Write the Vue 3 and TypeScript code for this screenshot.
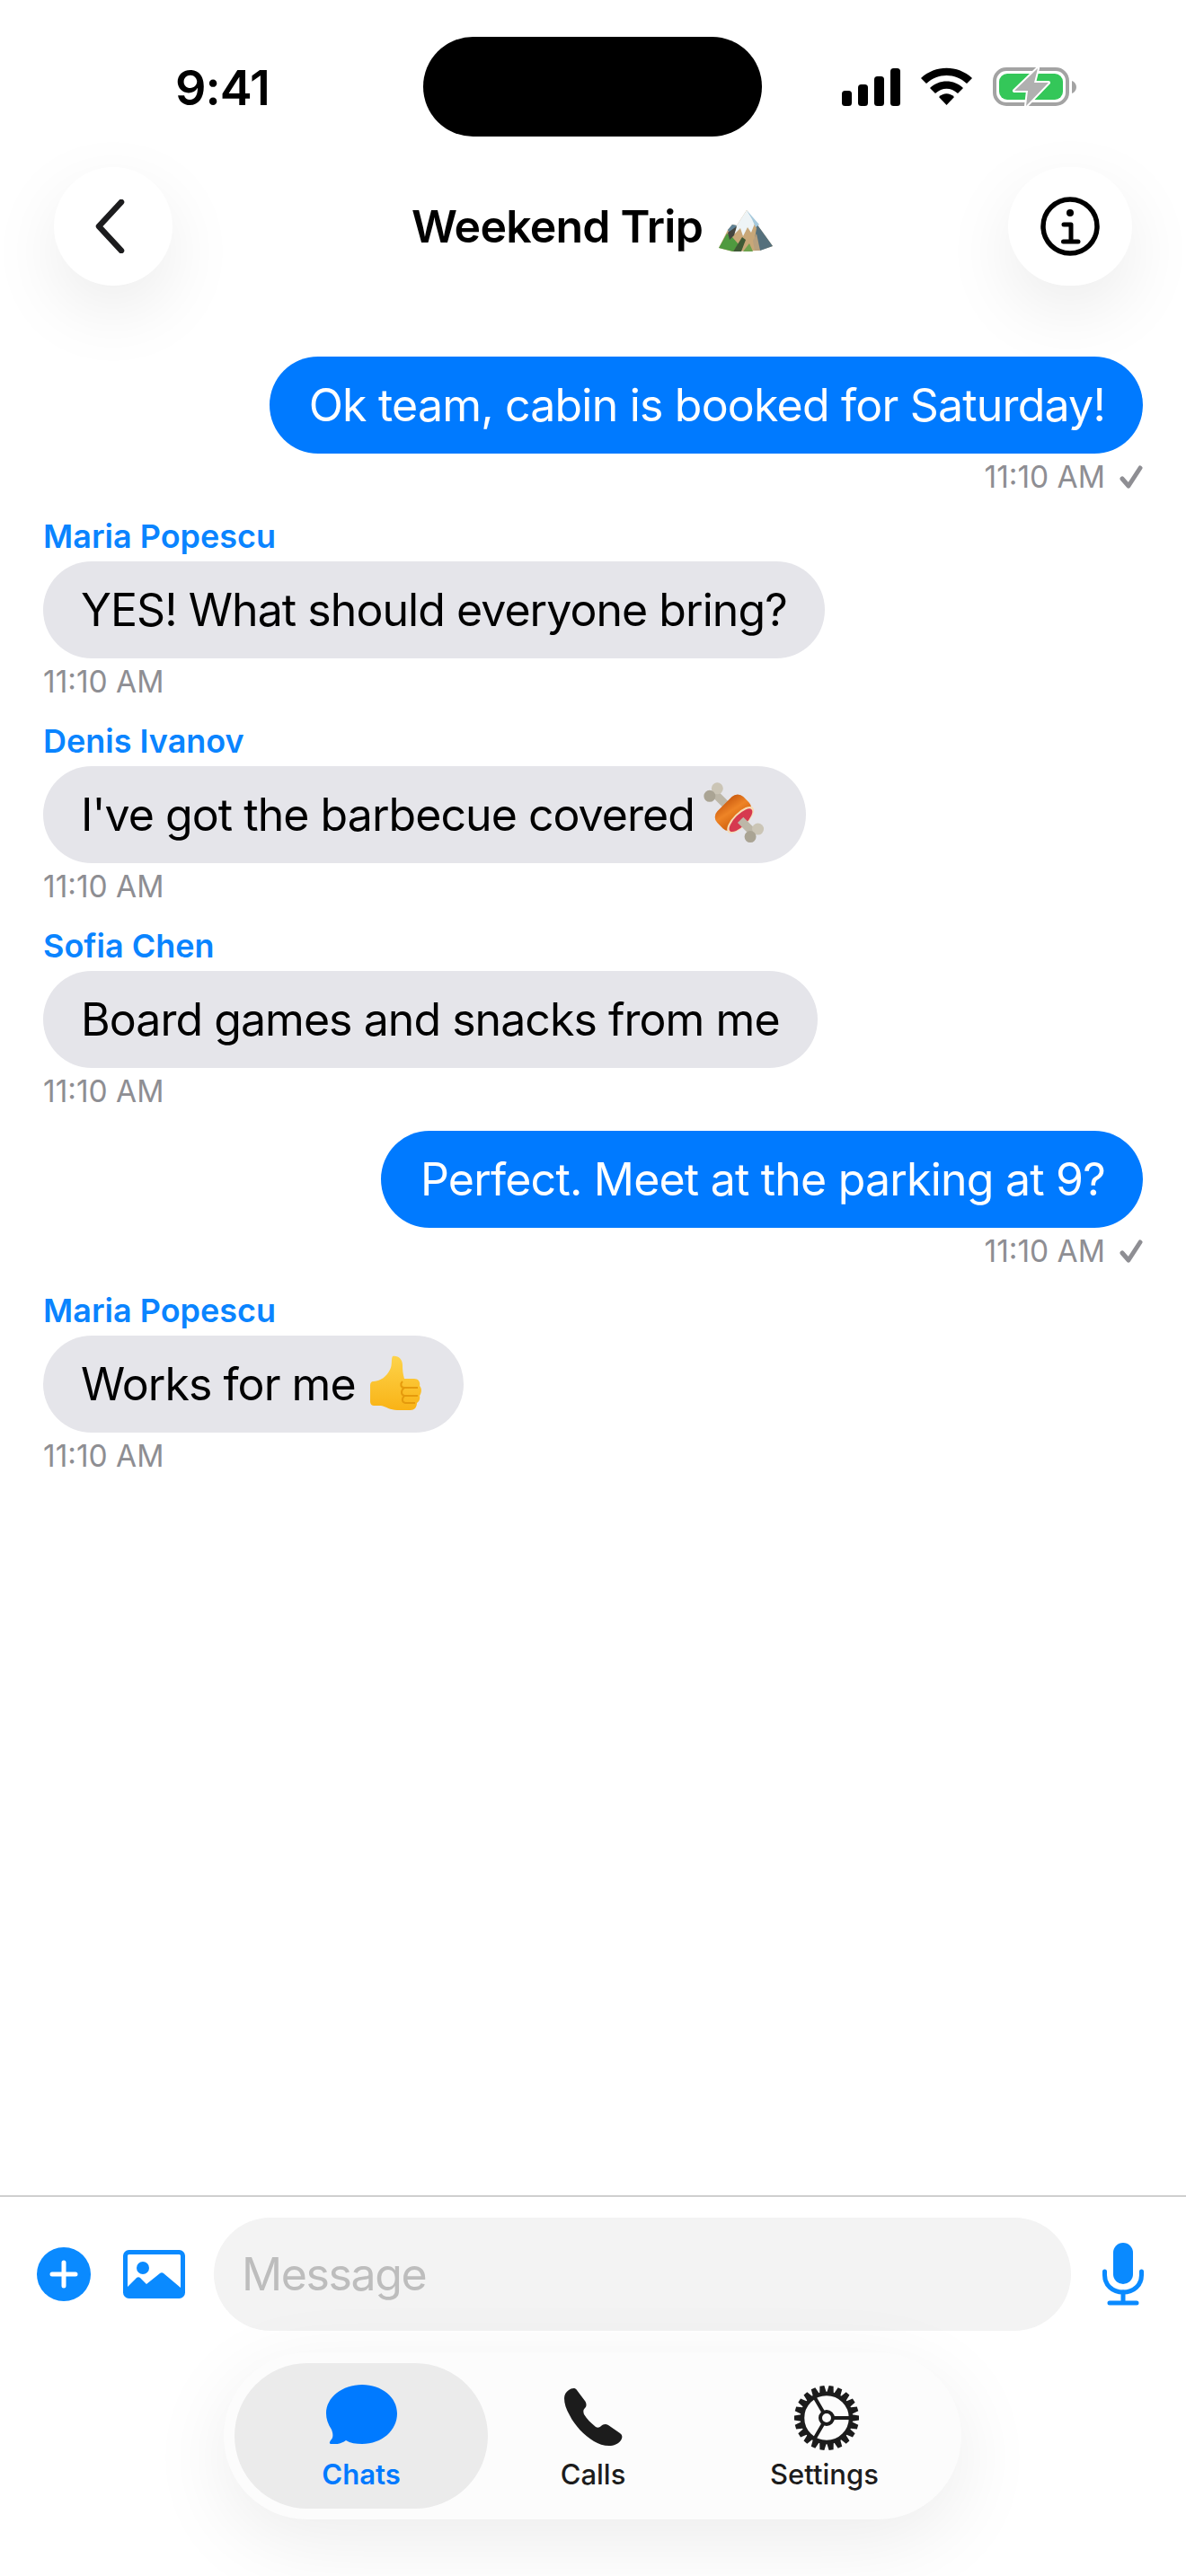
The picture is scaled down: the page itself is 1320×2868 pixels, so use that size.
<template>
  <div class="phone">
    <div class="island"></div>

    <div class="status-bar">
      <span class="clock">9:41</span>
      <svg class="status-icons" width="261" height="44" viewBox="0 0 261 44">
        <rect x="0" y="26" width="11" height="17" rx="3.5" fill="#000" />
        <rect x="18" y="19" width="11" height="24" rx="3.5" fill="#000" />
        <rect x="36" y="10" width="11" height="33" rx="3.5" fill="#000" />
        <rect x="54" y="1" width="11" height="42" rx="3.5" fill="#000" />
        <path d="M88 12 C104 -3 129 -3 145 12 L139 18 C126 6 107 6 94 18Z" fill="#000" />
        <path d="M98 23 C108 13 125 13 135 23 L129 29 C121 22 112 22 104 29Z" fill="#000" />
        <path d="M108 33 C113 28 120 28 125 33 L116.500 42Z" fill="#000" />
        <rect x="170" y="2" width="81" height="39" rx="13" fill="none" stroke="#a3a3a3" stroke-width="4" />
        <rect x="175" y="7" width="71" height="29" rx="9" fill="#34c759" />
        <path d="M256 15 C259 16 261 19 261 22 C261 25 259 28 256 29Z" fill="#a3a3a3" />
        <path d="M218 1 L192 26 L207 26 L205 43 L230 17 L214 17Z" fill="#b0b0b0" stroke="#fff" stroke-width="4" stroke-linejoin="round" paint-order="stroke" />
      </svg>
    </div>

    <header class="nav">
      <button class="round-btn back-btn" aria-label="Back">
        <svg width="36" height="60" viewBox="0 0 36 60">
          <path d="M31 3 L6 30 L31 57" fill="none" stroke="#1c1c1e" stroke-width="6.500" stroke-linecap="round" stroke-linejoin="round" />
        </svg>
      </button>
      <h1 class="title">
        Weekend Trip
        <svg class="title-emoji" width="60" height="46" viewBox="0 0 60 46">
          <path d="M31 0 L60 40 L45 45 L15 46 L0 42 L10 22 L15 16 L20 17Z" fill="#c8a778" />
          <path d="M15 16 L20 17 L14 30 L10 22Z" fill="#5f8296" />
          <path d="M37 8 L60 40 L46 45 L40 32 L42 20Z" fill="#55707c" />
          <path d="M31 0 L20 17 L17 27 L24 20 L27 29 L32 19 L36 25 L40 15 L36 6Z" fill="#eef4f6" />
          <path d="M31 0 L45 16 L41 19 L37 10Z" fill="#a6c9dc" />
          <path d="M0 42 L9 26 L15 30 L22 38 L16 46Z" fill="#4f9a3f" />
          <path d="M16 46 L26 30 L30 33 L25 46Z" fill="#3f5a35" />
          <path d="M27 46 L34 37 L38 46Z" fill="#6ea24d" />
          <path d="M10 25 L20 18 L17 28 L12 33Z" fill="#44443e" />
          <path d="M38 34 L42 26 L46 45 L40 45Z" fill="#b8a07e" />
        </svg>
      </h1>
      <button class="round-btn info-btn" aria-label="Info">
        <svg width="68" height="68" viewBox="0 0 68 68">
          <circle cx="34" cy="34" r="30" fill="none" stroke="#000" stroke-width="5.500" />
          <circle cx="34" cy="19" r="4" fill="#000" />
          <path d="M27 32 H35 V51 M26.500 51 H43" fill="none" stroke="#000" stroke-width="5" stroke-linecap="round" stroke-linejoin="round" />
        </svg>
      </button>
    </header>

    <main class="messages">
      <div v-for="(m, i) in messages" :key="i" class="msg" :class="m.sender ? 'in' : 'out'">
        <div v-if="m.sender" class="sender">{{ m.sender }}</div>
        <div class="bubble">
          <span>{{ m.text }}</span>
          <svg v-if="m.emoji === 'meat'" class="emoji meat" width="62" height="62" viewBox="0 0 62 62">
            <defs>
              <linearGradient id="ham" x1="0" y1="0" x2="1" y2="0.300">
                <stop offset="0" stop-color="#c9590f" />
                <stop offset="0.500" stop-color="#ee8426" />
                <stop offset="1" stop-color="#d4640f" />
              </linearGradient>
            </defs>
            <g transform="rotate(45 27 28)">
              <rect x="-2" y="23.500" width="20" height="9" fill="#bdb7a8" />
              <circle cx="-4" cy="22" r="6.500" fill="#cbc5b6" />
              <circle cx="-4" cy="34" r="6.500" fill="#aaa494" />
              <rect x="14" y="8" width="27" height="41" rx="9" fill="url(#ham)" />
              <ellipse cx="39" cy="28.500" rx="8" ry="19.500" fill="#f6dcb4" />
              <ellipse cx="39.500" cy="28.500" rx="6.500" ry="17" fill="#d6394f" />
              <rect x="39" y="24" width="20" height="9" fill="#bdb7a8" />
              <circle cx="60" cy="22" r="6.500" fill="#cbc5b6" />
              <circle cx="60" cy="34" r="6.500" fill="#aaa494" />
            </g>
          </svg>
          <svg v-if="m.emoji === 'thumb'" class="emoji thumb" width="58" height="62" viewBox="0 0 58 62">
            <defs>
              <linearGradient id="thumb" x1="0" y1="0" x2="0" y2="1">
                <stop offset="0" stop-color="#fdd34a" />
                <stop offset="1" stop-color="#f9b316" />
              </linearGradient>
            </defs>
            <path d="M25 0 C31 -1 36 3 36 10 C36 18 37 21 38 25 L49 25 C54 25 56 29 55 33 C58 36 57 41 55 44 C56 48 54 51 52 52 C52 57 49 60 45 60 L30 60 C22 60 18 56 12 55 L4 55 C1 55 0 52 0 50 L0 33 C0 30 1 28 4 28 C12 27 18 23 22 15 C25 10 23 3 25 0Z" fill="url(#thumb)" />
            <path d="M36 28 C33 31 34 35 38 35 L53 35 M38 35 C34 38 34 43 38 44 L53 44 M38 44 C35 47 35 51 39 52 L50 52" fill="none" stroke="#e59a0c" stroke-width="2" />
          </svg>
        </div>
        <div class="meta">
          <span>11:10 AM</span>
          <svg v-if="!m.sender" width="26" height="26" viewBox="0 0 26 26">
            <path d="M3 15 L10 23 L23 3" fill="none" stroke="#8e8e93" stroke-width="5" stroke-linecap="round" stroke-linejoin="round" />
          </svg>
        </div>
      </div>
    </main>

    <footer class="footer">
      <div class="composer">
        <svg class="plus" width="60" height="60" viewBox="0 0 60 60">
          <circle cx="30" cy="30" r="30" fill="#0a8aff" />
          <path d="M30 17 V43 M17 30 H43" stroke="#fff" stroke-width="5" stroke-linecap="round" />
        </svg>
        <svg class="picture" width="69" height="54" viewBox="0 0 69 54">
          <rect x="2.500" y="2.500" width="64" height="49" rx="4" fill="#fff" stroke="#0a8aff" stroke-width="5" />
          <circle cx="22" cy="20" r="7" fill="#0a8aff" />
          <path d="M5 41 L15 31 C16 30 18 30 19 31 L26 38 L41 26 C42 25 44 25 45 26 L64 42 L64 50 L5 50Z" fill="#0a8aff" />
        </svg>
        <div class="input">Message</div>
        <svg class="mic" width="46" height="70" viewBox="0 0 46 70">
          <rect x="12" y="0" width="22" height="46" rx="11" fill="#0a8aff" />
          <path d="M2.500 32 V36 C2.500 47 11 55 23 55 C35 55 43.500 47 43.500 36 V32" fill="none" stroke="#0a8aff" stroke-width="5" stroke-linecap="round" />
          <path d="M23 55 V67 M8 67 H38" fill="none" stroke="#0a8aff" stroke-width="5" stroke-linecap="round" />
        </svg>
      </div>

      <nav class="tabs">
        <div class="tab active chats">
          <svg width="79" height="66" viewBox="0 0 79 66">
            <path d="M40 0 C62 0 79 14 79 32 C79 51 62 66 40 66 C33 66 27 65 22 62 C17 66 9 67 5 66 C3 65 4 64 5 62 C8 59 8 55 6 50 C2 44 0 38 0 32 C0 14 18 0 40 0Z" fill="#007aff" />
          </svg>
          <span>Chats</span>
        </div>
        <div class="tab calls">
          <svg width="65" height="64" viewBox="0 0 65 64">
            <path d="M5 2 C8 0 12 -1 14 2 L23 14 C25 17 25 20 23 22 C21 24 21 26 22 29 C25 34 30 39 35 43 C37 44 39 44 41 42 C43 40 46 39 49 41 L62 50 C65 52 65 55 63 58 C60 62 55 64 50 64 C44 64 38 62 33 59 C22 52 12 42 6 30 C2 23 0 17 0 11 C0 7 2 4 5 2Z" fill="#1c1c1c" />
          </svg>
          <span>Calls</span>
        </div>
        <div class="tab settings">
          <svg width="76" height="76" viewBox="0 0 76 76">
            <path v-for="a in teeth" :key="a" d="M34 11 L35.500 2 H40.500 L42 11Z" fill="#1c1c1c" :transform="`rotate(${a} 38 38)`" />
            <circle cx="38" cy="38" r="27" fill="none" stroke="#1c1c1c" stroke-width="4.500" />
            <circle cx="38" cy="38" r="7" fill="none" stroke="#1c1c1c" stroke-width="4" />
            <path d="M45 38 H65 M34.500 32 L24 14 M34.500 44 L24 62" fill="none" stroke="#1c1c1c" stroke-width="4" />
          </svg>
          <span>Settings</span>
        </div>
      </nav>
    </footer>
  </div>
</template>

<script setup lang="ts">
interface Message {
  sender?: string
  text: string
  emoji?: 'meat' | 'thumb'
}

const messages: Message[] = [
  { text: 'Ok team, cabin is booked for Saturday!' },
  { sender: 'Maria Popescu', text: 'YES! What should everyone bring?' },
  { sender: 'Denis Ivanov', text: "I've got the barbecue covered", emoji: 'meat' },
  { sender: 'Sofia Chen', text: 'Board games and snacks from me' },
  { text: 'Perfect. Meet at the parking at 9?' },
  { sender: 'Maria Popescu', text: 'Works for me', emoji: 'thumb' },
]

// gear teeth, one sits on the 3 o'clock spoke
const teeth = Array.from({ length: 22 }, (_, i) => 90 + (i * 360) / 22)
</script>

<style>
html,
body {
  margin: 0;
  background: #fff;
}
</style>

<style scoped>
.phone {
  position: relative;
  width: 1320px;
  height: 2868px;
  overflow: hidden;
  background: #fff;
  display: flex;
  flex-direction: column;
  font-family: Inter, "Noto Sans", sans-serif;
  color: #000;
}

.island {
  position: absolute;
  left: 471px;
  top: 41px;
  width: 377px;
  height: 111px;
  border-radius: 56px;
  background: #000;
}

.status-bar {
  height: 186px;
  box-sizing: border-box;
  padding: 74px 122px 0 195px;
  display: flex;
  justify-content: space-between;
  align-items: flex-start;
}

.status-icons {
  margin-top: 1px;
}

.clock {
  font-size: 54px;
  line-height: 48px;
  font-weight: 600;
  letter-spacing: -1px;
}

.nav {
  height: 132px;
  padding: 0 60px;
  display: flex;
  justify-content: space-between;
  align-items: center;
}

.round-btn {
  height: 132px;
  border: none;
  padding: 0;
  border-radius: 66px;
  background: #fff;
  box-shadow: 0 28px 80px rgba(0, 0, 0, 0.08);
  display: flex;
  align-items: center;
  justify-content: center;
}

.back-btn {
  width: 132px;
}

.back-btn svg {
  margin-right: 9px;
}

.info-btn {
  width: 138px;
}

.title {
  margin: 0 0 0 4px;
  display: flex;
  align-items: center;
  gap: 18px;
  font-size: 50px;
  font-weight: 600;
  letter-spacing: -0.8px;
}

.title-emoji {
  margin-top: 10px;
}

.messages {
  flex: 1;
  padding: 79px 48px 0;
  display: flex;
  flex-direction: column;
}

.msg {
  display: flex;
  flex-direction: column;
  margin-bottom: 24px;
}

.msg.out {
  align-items: flex-end;
}

.msg.in {
  align-items: flex-start;
}

.sender {
  font-size: 36px;
  line-height: 44px;
  font-weight: 600;
  color: #0a84ff;
  margin-bottom: 6px;
}

.bubble {
  height: 108px;
  box-sizing: border-box;
  padding: 0 42px;
  border-radius: 54px;
  display: flex;
  align-items: center;
  gap: 16px;
  font-size: 50px;
  letter-spacing: -0.95px;
}

.out .bubble {
  padding-left: 44px;
  letter-spacing: -0.8px;
  background: #007aff;
  color: #fff;
}

.in .bubble {
  background: #e5e5ea;
  color: #000;
}

.emoji {
  overflow: visible;
  margin-right: 4px;
}

.meta {
  display: flex;
  align-items: center;
  gap: 16px;
  margin-top: 6px;
  height: 40px;
  font-size: 33.5px;
  color: #8e8e93;
}

.footer {
  border-top: 2px solid #cfcfcf;
  height: 424px;
  box-sizing: border-box;
  display: flex;
  flex-direction: column;
}

.composer {
  margin-top: 23px;
  height: 126px;
  padding: 0 47px 0 41px;
  display: flex;
  align-items: center;
}

.plus {
  flex: none;
  margin-right: 36px;
}

.picture {
  flex: none;
  margin-right: 32px;
}

.input {
  flex: none;
  width: 954px;
  height: 126px;
  box-sizing: border-box;
  padding-left: 31px;
  margin-right: 35px;
  border-radius: 63px;
  background: #f3f3f3;
  color: #bdbdbd;
  font-size: 50px;
  letter-spacing: -1.4px;
  line-height: 126px;
}

.tabs {
  align-self: flex-start;
  margin: 24px 0 0 249px;
  width: 821px;
  height: 186px;
  box-sizing: border-box;
  padding: 12px;
  border-radius: 93px;
  background: #fcfcfc;
  box-shadow: 0 24px 90px rgba(0, 0, 0, 0.08);
  display: flex;
}

.tab {
  height: 162px;
  box-sizing: border-box;
  border-radius: 81px;
  display: flex;
  flex-direction: column;
  align-items: center;
  font-size: 31px;
  font-weight: 500;
  color: #1c1c1c;
}

.tab svg {
  display: block;
  flex: none;
}

.chats {
  width: 282px;
  background: #ebebeb;
  color: #007aff;
  font-weight: 600;
}

.chats svg {
  margin: 24px 0 15px;
}

.calls {
  width: 234px;
}

.calls svg {
  margin: 28px 0 13px;
}

.settings {
  width: 281px;
}

.settings svg {
  margin: 23px 0 6px 4px;
}
</style>
